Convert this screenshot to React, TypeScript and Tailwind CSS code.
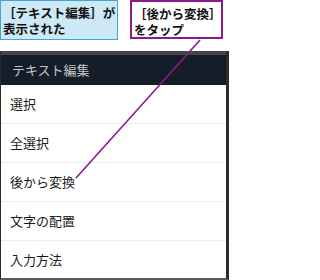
const items = ["選択", "全選択", "後から変換", "文字の配置", "入力方法"];

export default function App() {
  return (
    <div
      className="relative w-[229px] h-[280px] overflow-hidden bg-white"
      style={{ fontFamily: '"Noto Sans CJK JP", "Noto Sans", sans-serif' }}
    >
      <div className="flex items-start h-[40px]">
        <div className="w-[118px] h-[40px] bg-[#cce9f5] border border-[#45a3d8] pl-[2px] pt-[4px] text-[12.5px] leading-[15.5px] font-bold text-[#111] whitespace-nowrap">
          <p>
            ［テキスト編集］が
            <br />
            表示された
          </p>
        </div>
        <div className="ml-[12px] w-[93px] h-[39px] bg-white border-2 border-[#8b1a8b] pl-[2px] pt-[4px] text-[12.5px] leading-[15.5px] font-bold text-[#111] whitespace-nowrap">
          <p>
            ［後から変換］
            <br />
            をタップ
          </p>
        </div>
      </div>

      <div className="mt-[11px] h-[229px] w-[229px] flex flex-col border-l border-l-[#2a2a2a] border-r-[3px] border-r-[#2b2b2b] border-b-2 border-b-[#5a5a5a]">
        <div className="h-[4px] bg-[#41464c]" />
        <div className="h-[30px] bg-[#151d28] flex items-center pl-[11px] text-[13px] text-[#c3c7cc]">
          テキスト編集
        </div>
        <div className="flex-1 flex flex-col">
          {items.map((item, i) => (
            <div
              key={item}
              className={
                i < items.length - 1
                  ? "h-[39px] flex items-center pl-[9px] text-[13px] text-[#1a1a1a] border-b border-[#ececec]"
                  : "flex-1 flex items-center pl-[9px] text-[13px] text-[#1a1a1a]"
              }
            >
              {item}
            </div>
          ))}
        </div>
      </div>

      <svg className="absolute inset-0 pointer-events-none" width="229" height="280">
        <line x1="200" y1="40" x2="76" y2="178" stroke="#8b1a8b" strokeWidth="1.6" />
      </svg>
    </div>
  );
}
